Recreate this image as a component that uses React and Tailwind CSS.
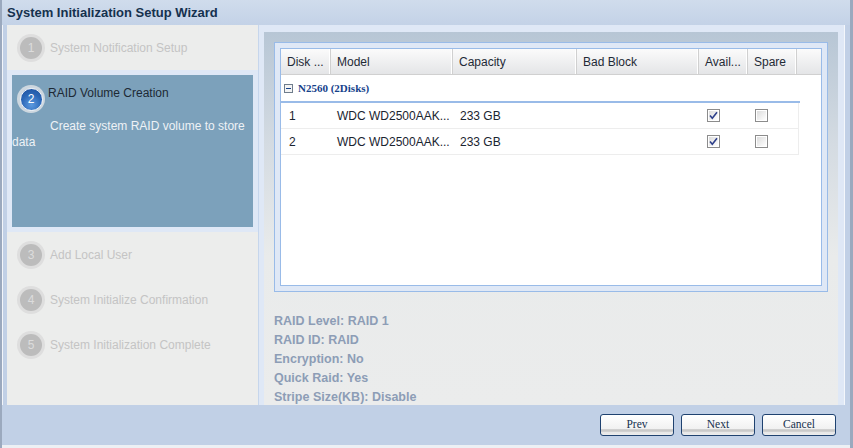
const cols = [50, 122, 124, 122, 49, 49];

function Check({ checked }) {
  return (
    <svg width="13" height="13" viewBox="0 0 13 13" className="block">
      <defs>
        <linearGradient id={checked ? "cbg1" : "cbg2"} x1="0" y1="0" x2="1" y2="1">
          <stop offset="0" stopColor="#dcdcdc" />
          <stop offset="1" stopColor="#ffffff" />
        </linearGradient>
      </defs>
      <rect x="0.5" y="0.5" width="12" height="12" fill="#ffffff" stroke="#8c8c8c" />
      <rect x="2" y="2" width="9" height="9" fill={`url(#${checked ? "cbg1" : "cbg2"})`} />
      {checked && (
        <path d="M3 6.5 L5.3 9.2 L10 3.2" fill="none" stroke="#2d3f8a" strokeWidth="1.6" />
      )}
    </svg>
  );
}

function Circle({ n, active }) {
  if (active) {
    return (
      <div className="w-[28px] h-[28px] rounded-full bg-[#cdd7df] flex items-center justify-center shrink-0">
        <div className="w-[23px] h-[23px] rounded-full border border-[#eef3f8] bg-[radial-gradient(circle_at_50%_75%,#5d9ae0_0%,#2a66b6_55%,#1d4f9c_100%)] flex items-center justify-center text-white text-[12px] leading-none">
          {n}
        </div>
      </div>
    );
  }
  return (
    <div className="w-[28px] h-[28px] rounded-full bg-[#dedede] flex items-center justify-center shrink-0">
      <div className="w-[22px] h-[22px] rounded-full bg-[#bcbcbc] flex items-center justify-center text-[#dcdcdc] text-[12px] leading-none">
        {n}
      </div>
    </div>
  );
}

function Step({ n, label }) {
  return (
    <div className="h-[45px] flex items-center pl-[10px]">
      <Circle n={n} />
      <span className="ml-[5px] text-[12px] text-[#c4c4c4] whitespace-nowrap">{label}</span>
    </div>
  );
}

function Button({ children }) {
  return (
    <button className="w-[74px] h-[22px] rounded-[3px] border border-[#1f4270] bg-[linear-gradient(to_bottom,#ffffff_0%,#f1f1f1_70%,#c9c9c9_73%,#c9c9c9_82%,#e6e6e6_84%,#ececec_100%)] text-[11.5px] text-[#15314e] font-['Liberation_Serif',serif] leading-none">
      {children}
    </button>
  );
}

export default function App() {
  const headers = ["Disk ...", "Model", "Capacity", "Bad Block", "Avail...", "Spare"];
  const rows = [
    ["1", "WDC WD2500AAK...", "233 GB"],
    ["2", "WDC WD2500AAK...", "233 GB"],
  ];
  return (
    <div className="w-[853px] h-[448px] overflow-hidden flex flex-col bg-[#c1d0e6] border-l-2 border-r-[3px] border-[#9ba9be] font-['Liberation_Sans',Arial,sans-serif]">
      {/* title */}
      <div className="h-[25px] shrink-0 flex items-center pl-[5px] bg-[linear-gradient(to_bottom,#d0dcec,#c3d2e7)] text-[13px] font-bold text-[#15314e]">
        System Initialization Setup Wizard
      </div>

      {/* body */}
      <div className="h-[380px] shrink-0 flex border-l border-[#f2f5fa] pl-[4px] pr-[5px]">
        {/* sidebar */}
        <div className="w-[251px] shrink-0 bg-[#ecedec] flex flex-col">
          <Step n="1" label="System Notification Setup" />
          <div className="h-[162px] bg-[#dfe8f6] p-[5px]">
            <div className="h-full bg-[#7ca1bb] pt-[10px]">
              <div className="flex items-start pl-[5px]">
                <Circle n="2" active />
                <span className="ml-[3px] mt-[1px] text-[12px] leading-[14px] text-[#1d2935] whitespace-nowrap">
                  RAID Volume Creation
                </span>
              </div>
              <p className="mt-[5px] indent-[38px] text-[12px] leading-[16px] text-[#eef2f6]">
                Create system RAID volume to store data
              </p>
            </div>
          </div>
          <Step n="3" label="Add Local User" />
          <Step n="4" label="System Initialize Confirmation" />
          <Step n="5" label="System Initialization Complete" />
        </div>

        {/* main */}
        <div className="flex-1 flex flex-col border-l border-[#c6d6ec] border-r border-r-[#f4f7fb] bg-[#dfe8f6] pl-[5px] pr-[6px] pt-[7px]">
          <div className="flex-1 overflow-hidden flex flex-col px-[10px] pt-[10px] bg-[linear-gradient(to_bottom,#b7c6d5_0%,#d4dbe2_30%,#e9ebeb_60%,#ebecec_100%)]">
            {/* grid frame */}
            <div className="h-[250px] shrink-0 flex flex-col border border-[#99bbe8] bg-[#dfe8f6] p-[5px]">
              <div className="flex-1 border border-[#99bbe8] bg-white flex flex-col overflow-hidden">
                {/* header */}
                <div className="h-[26px] shrink-0 flex border-b border-[#d0d0d0] bg-[linear-gradient(to_bottom,#fbfbfb,#e4e5e7)]">
                  {headers.map((h, i) => (
                    <div
                      key={h}
                      style={{ width: cols[i] }}
                      className="h-full flex items-center pl-[6px] border-r border-[#d0d0d0] shadow-[inset_-1px_0_0_#ffffff] text-[12px] text-[#1f2a36] whitespace-nowrap overflow-hidden"
                    >
                      {h}
                    </div>
                  ))}
                </div>
                {/* group */}
                <div className="w-[519px] h-[28px] shrink-0 flex items-center pl-[3px] pt-[1px] border-b-2 border-[#99bbe8]">
                  <svg width="9" height="9" viewBox="0 0 9 9" className="block">
                    <rect x="0.5" y="0.5" width="8" height="8" fill="#f4f4f4" stroke="#6f7d8c" />
                    <line x1="2" y1="4.5" x2="7" y2="4.5" stroke="#15428b" strokeWidth="1" />
                  </svg>
                  <span className="ml-[5px] text-[11px] font-bold text-[#15428b] font-['Liberation_Serif',serif]">
                    N2560 (2Disks)
                  </span>
                </div>
                {rows.map((r, ri) => (
                  <div key={ri} className="w-[518px] h-[26px] shrink-0 flex border-b border-r border-[#ededed] text-[12px] text-[#1a2430]">
                    <div style={{ width: cols[0] }} className="flex items-center pl-[8px]">{r[0]}</div>
                    <div style={{ width: cols[1] }} className="flex items-center pl-[6px] whitespace-nowrap">{r[1]}</div>
                    <div style={{ width: cols[2] }} className="flex items-center pl-[7px]">{r[2]}</div>
                    <div style={{ width: cols[3] }} />
                    <div style={{ width: cols[4] }} className="flex items-center pl-[8px]">
                      <Check checked />
                    </div>
                    <div style={{ width: cols[5] }} className="flex items-center pl-[7px]">
                      <Check />
                    </div>
                  </div>
                ))}
              </div>
            </div>

            {/* summary */}
            <div className="mt-[20px] flex flex-col text-[12.5px] leading-[19px] font-bold text-[#8d9db6]">
              <div>RAID Level: RAID 1</div>
              <div>RAID ID: RAID</div>
              <div>Encryption: No</div>
              <div>Quick Raid: Yes</div>
              <div>Stripe Size(KB): Disable</div>
            </div>
          </div>
        </div>
      </div>

      {/* footer */}
      <div className="h-[40px] shrink-0 flex justify-end items-start gap-[7px] pt-[9px] pr-[14px]">
        <Button>Prev</Button>
        <Button>Next</Button>
        <Button>Cancel</Button>
      </div>
      <div className="h-[3px] shrink-0 bg-[#edf0f4]" />
    </div>
  );
}
